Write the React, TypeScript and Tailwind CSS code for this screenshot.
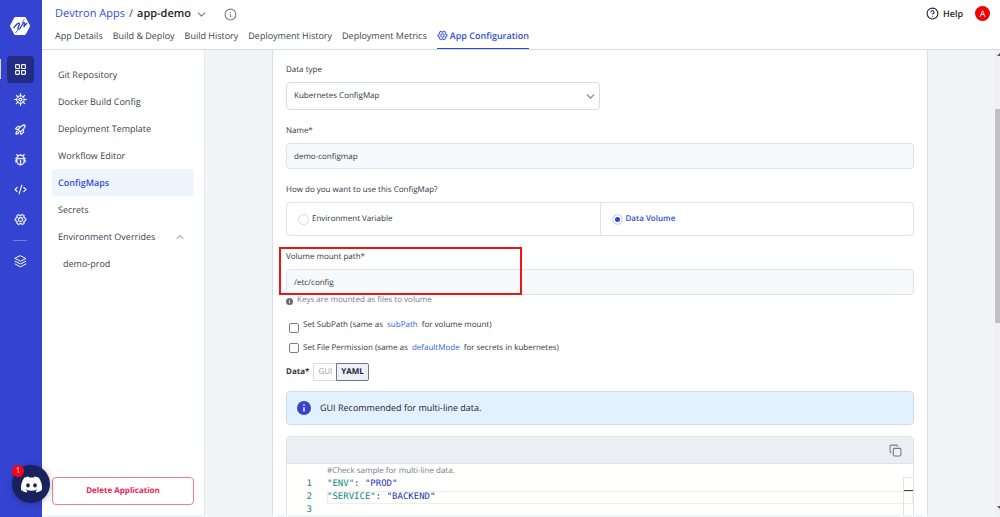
import { useState } from "react";
import type { ReactNode } from "react";
import { ChevronDown, ChevronUp, CircleHelp, Copy, Info, LayoutGrid, CodeXml } from "lucide-react";
import { PiBugBeetle, PiGearSix, PiRocketLaunch } from "react-icons/pi";
import { FaDiscord } from "react-icons/fa";

const TABS = ["App Details", "Build & Deploy", "Build History", "Deployment History", "Deployment Metrics"];

const CONFIG_LINKS = [
  "Git Repository",
  "Docker Build Config",
  "Deployment Template",
  "Workflow Editor",
  "ConfigMaps",
  "Secrets",
];

const YAML_ROWS = [
  { key: '"ENV"', value: '"PROD"' },
  { key: '"SERVICE"', value: '"BACKEND"' },
];

function Logo() {
  return (
    <svg viewBox="0 0 40 40" className="h-5 w-5" aria-hidden="true">
      <path d="M11 2h18a3 3 0 0 1 2.600 1.500l8 15a3 3 0 0 1 0 3l-8 15A3 3 0 0 1 29 38H11a3 3 0 0 1-2.600-1.500l-8-15a3 3 0 0 1 0-3l8-15A3 3 0 0 1 11 2z" fill="#fff" />
      <path d="M7 24l7-8q4-3 5 0l-3 8q0 4 4 1l6-10q3-3 3 0l-1 6 6-7" fill="none" stroke="#3444d1" strokeWidth="2.800" strokeLinejoin="round" />
      <path d="M11 34l6-8M29 6l-5 8" fill="none" stroke="#3444d1" strokeWidth="1.600" />
    </svg>
  );
}

function HelmIcon() {
  const spokes = [0, 45, 90, 135, 180, 225, 270, 315];
  return (
    <svg viewBox="0 0 24 24" className="h-[13px] w-[13px]" fill="none" stroke="currentColor" strokeWidth="1.900" strokeLinecap="round" aria-hidden="true">
      <circle cx="12" cy="12" r="7" />
      <circle cx="12" cy="12" r="2.500" />
      {spokes.map((a) => (
        <g key={a} transform={`rotate(${a} 12 12)`}>
          <path d="M12 5V1" />
          <path d="M12 9.500V5" strokeWidth="0.800" />
        </g>
      ))}
    </svg>
  );
}

function LayersIcon() {
  return (
    <svg viewBox="0 0 24 24" className="h-[13px] w-[13px]" fill="none" stroke="currentColor" strokeWidth="1.800" strokeLinecap="round" strokeLinejoin="round" aria-hidden="true">
      <path d="M12 1.500l10 5-10 5-10-5z" />
      <path d="M2 11.500l10 5 10-5M2 16.500l10 5.500 10-5.500" />
    </svg>
  );
}

function RailItem({ label, active, children }: { label: string; active?: boolean; children: ReactNode }) {
  return (
    <button
      type="button"
      aria-label={label}
      className={`flex h-[27px] w-[27px] items-center justify-center rounded text-white ${active ? "bg-[#232c82]" : ""}`}
    >
      {children}
    </button>
  );
}

function Rail() {
  return (
    <nav className="flex w-[42px] shrink-0 flex-col items-center gap-[3px] bg-[#3444d1] pt-4 pr-[2px]">
      <a href="#home" aria-label="Home" className="mb-[17px]">
        <Logo />
      </a>
      <div className="relative">
        <span className="absolute top-[3px] -left-[7px] h-5 w-px bg-white/80" />
        <RailItem label="Applications" active>
          <LayoutGrid size={13} strokeWidth={2} />
        </RailItem>
      </div>
      <RailItem label="Charts"><HelmIcon /></RailItem>
      <RailItem label="Deployment groups"><PiRocketLaunch size={13} strokeWidth={8} /></RailItem>
      <RailItem label="Security"><PiBugBeetle size={13} strokeWidth={8} /></RailItem>
      <RailItem label="Bulk edit"><CodeXml size={13} strokeWidth={2} /></RailItem>
      <RailItem label="Global configurations"><PiGearSix size={13} strokeWidth={8} /></RailItem>
      <span className="my-1 h-px w-[14px] bg-white/30" />
      <RailItem label="Stack manager"><LayersIcon /></RailItem>
    </nav>
  );
}

function Header() {
  return (
    <header className="flex h-[50px] shrink-0 justify-between border-b border-[#d6dbdf] bg-white pr-[10px] pl-[13px]">
      <div className="flex flex-col">
        <div className="flex h-[27px] items-center pt-px text-[11px]">
          <a href="#apps" className="text-[#2f50d8]">Devtron Apps</a>
          <span className="mx-1 text-[#3b444c]">/</span>
          <button type="button" className="flex items-center gap-1 font-semibold text-[#1f2328]">
            app-demo
            <ChevronDown size={13} strokeWidth={2} className="text-[#767d84]" />
          </button>
          <Info size={13} strokeWidth={2} className="ml-4 text-[#767d84]" />
        </div>
        <nav className="flex h-[22px] gap-[10px] text-[9px] leading-[17px] text-[#3b444c]">
          {TABS.map((tab) => (
            <a key={tab} href="#tab">{tab}</a>
          ))}
          <a href="#config" className="flex h-[22px] gap-[2px] border-b border-[#2f45d4] font-semibold text-[#2f50d8]">
            <PiGearSix size={11} strokeWidth={6} className="mt-[3px]" />
            App Configuration
          </a>
        </nav>
      </div>
      <div className="flex h-[27px] items-center gap-3">
        <button type="button" className="flex items-center gap-1 text-[9px] font-semibold text-[#1f2328]">
          <CircleHelp size={13} strokeWidth={2} />
          Help
        </button>
        <span className="flex h-[15px] w-[15px] items-center justify-center rounded-full bg-[#ee0000] text-[9px] text-white">A</span>
      </div>
    </header>
  );
}

function Sidebar() {
  return (
    <aside className="flex w-[163px] shrink-0 flex-col justify-between border-r border-[#e4e7ea] bg-white px-[10px] pt-[11px] pb-[10px] text-[9px] text-[#3b444c]">
      <nav className="flex flex-col">
        {CONFIG_LINKS.map((link) => (
          <a
            key={link}
            href="#section"
            className={`h-[27px] rounded-sm px-[6px] leading-[27px] ${link === "ConfigMaps" ? "bg-[#eef5ff] font-semibold text-[#2f50d8]" : ""}`}
          >
            {link}
          </a>
        ))}
        <button type="button" className="flex h-[27px] items-center justify-between pr-2 pl-[6px]">
          Environment Overrides
          <ChevronUp size={12} strokeWidth={2} className="text-[#767d84]" />
        </button>
        <a href="#demo-prod" className="h-[27px] pl-[11px] leading-[27px]">demo-prod</a>
      </nav>
      <button type="button" className="h-7 rounded-sm border border-[#f77a94] text-[8px] font-bold text-[#f5234f]">
        Delete Application
      </button>
    </aside>
  );
}

function TextField({ id, label, value }: { id: string; label: string; value: string }) {
  return (
    <div className="flex flex-col gap-1">
      <label htmlFor={id}>{label}</label>
      <input
        id={id}
        defaultValue={value}
        className="h-[26px] rounded-sm border border-[#dfe3e8] bg-[#f7fafc] px-[7px] outline-none"
      />
    </div>
  );
}

function MountOption({ label, checked, onSelect }: { label: string; checked: boolean; onSelect: () => void }) {
  return (
    <label className={`flex flex-1 items-center gap-[3px] px-[11px] ${checked ? "font-semibold text-[#2f50d8]" : ""}`}>
      <input
        type="radio"
        name="mount"
        checked={checked}
        onChange={onSelect}
        className="h-[11px] w-[11px] appearance-none rounded-full border border-[#d6dbdf] bg-white bg-clip-padding checked:bg-[#2f45d4] checked:shadow-[inset_0_0_0_2px_#ffffff]"
      />
      {label}
    </label>
  );
}

function CheckRow({ id, align, before, link, after }: { id: string; align: string; before: string; link: string; after: string }) {
  return (
    <div className={`flex h-4 gap-1 pl-[3px] ${align}`}>
      <input id={id} type="checkbox" className="h-[10px] w-[10px] appearance-none rounded-xs border border-[#767d84] bg-white" />
      <label htmlFor={id}>
        {before} <a href="#docs" className="mx-[2px] text-[#2f66e0]">{link}</a> {after}
      </label>
    </div>
  );
}

function CodeEditor() {
  return (
    <section className="mt-[11px] rounded-sm border border-[#dfe3e8]">
      <div className="flex h-[27px] items-center justify-end border-b border-[#dfe3e8] bg-[#ebeff4] pr-[11px]">
        <button type="button" aria-label="Copy">
          <Copy size={13} strokeWidth={2} className="-scale-x-100 -scale-y-100 rotate-180 text-[#767d84]" />
        </button>
      </div>
      <div className="bg-[#fffffe] font-['DejaVu_Sans_Mono',monospace] text-[9px] leading-[13px]">
        <p className="h-[13px] pl-10 font-['Open_Sans',sans-serif] text-[8px] text-[#767d84]">#Check sample for multi-line data.</p>
        <div className="relative pt-px">
          {YAML_ROWS.map((row, i) => (
            <div key={row.key} className="flex h-[13px]">
              <span className="w-[25px] text-right text-[#237893]">{i + 1}</span>
              <code className={`ml-[15px] flex-1 whitespace-pre font-['DejaVu_Sans_Mono',monospace] ${i === 1 ? "shadow-[inset_0_0_0_1px_#eeeeee]" : ""}`}>
                <span className="text-[#098a80]">{row.key}</span>
                <span>: </span>
                <span className="text-[#2334b8]">{row.value}</span>
              </code>
            </div>
          ))}
          <div className="h-[13px] w-[25px] text-right text-[#237893]">3</div>
          <div className="absolute inset-y-0 right-0 w-[10px] border-t border-l border-[#e2e2e2]">
            <div className="mt-3 h-px bg-[#424242]" />
          </div>
        </div>
      </div>
    </section>
  );
}

function ConfigForm() {
  const [mount, setMount] = useState("Data Volume");

  return (
    <form className="flex-1 overflow-hidden border-x border-[#d9dee3] bg-white px-[13px] pt-3 text-[8px] leading-4 text-[#2f373f]">
      <div className="flex flex-col gap-[13px]">
        <div className="flex flex-col gap-1">
          <label htmlFor="data-type">Data type</label>
          <div className="relative w-1/2">
            <select id="data-type" className="h-7 w-full appearance-none rounded-sm border border-[#d6dbdf] bg-white px-[7px]">
              <option>Kubernetes ConfigMap</option>
            </select>
            <ChevronDown size={13} strokeWidth={2} className="pointer-events-none absolute top-[8px] right-[3px] text-[#767d84]" />
          </div>
        </div>

        <TextField id="name" label="Name*" value="demo-configmap" />

        <fieldset>
          <legend className="mb-1">How do you want to use this ConfigMap?</legend>
          <div className="flex h-[34px] divide-x divide-[#dfe3e8] rounded-sm border border-[#dfe3e8]">
            {["Environment Variable", "Data Volume"].map((option) => (
              <MountOption key={option} label={option} checked={mount === option} onSelect={() => setMount(option)} />
            ))}
          </div>
        </fieldset>

        <div className="relative">
          <TextField id="mount-path" label="Volume mount path*" value="/etc/config" />
          {/* highlight around the mount path */}
          <div className="pointer-events-none absolute -top-[2px] bottom-0 -left-[7px] w-[243px] border-2 border-[#f01414]" />
        </div>
      </div>

      <p className="flex h-[10px] items-center gap-1 leading-[10px] text-[#767d84]">
        <svg viewBox="0 0 16 16" className="mt-[3px] h-[7px] w-[7px]" aria-hidden="true">
          <circle cx="8" cy="8" r="8" fill="#666c73" />
          <path d="M8 7v5M8 3.500v2" stroke="#fff" strokeWidth="2" />
        </svg>
        Keys are mounted as files to volume
      </p>

      <div className="mt-3 flex flex-col gap-[7px]">
        <CheckRow id="sub-path" align="items-end" before="Set SubPath (same as" link="subPath" after="for volume mount)" />
        <CheckRow id="file-permission" align="items-center" before="Set File Permission (same as" link="defaultMode" after="for secrets in kubernetes)" />
      </div>

      <div className="mt-[7px] flex h-[18px] items-center gap-1">
        <span className="font-bold">Data*</span>
        <div className="flex h-[18px]">
          <button type="button" className="rounded-l-xs border border-r-0 border-[#d6dbdf] px-1 text-[#9aa0a6]">GUI</button>
          <button type="button" className="rounded-r-xs border border-[#6f7396] bg-[#edf1f5] px-1 font-bold text-[#1f2340]">YAML</button>
        </div>
      </div>

      <div className="mt-[10px] flex h-[34px] items-center gap-[9px] rounded-sm border border-[#c5ddfb] bg-[#e3f0ff] px-[10px] text-[9px] text-[#1f2328]">
        <svg viewBox="0 0 16 16" className="h-[14px] w-[14px]" aria-hidden="true">
          <circle cx="8" cy="8" r="8" fill="#3444d1" />
          <path d="M8 7v5M8 3.800v1.700" stroke="#fff" strokeWidth="1.600" />
        </svg>
        GUI Recommended for multi-line data.
      </div>

      <CodeEditor />
    </form>
  );
}

function ScrollTrack() {
  return (
    <div className="flex w-[5px] shrink-0 flex-col items-end justify-between overflow-hidden bg-[#f1f1f1]">
      <svg viewBox="0 0 3 3" className="mt-[3px] h-[3px] w-[3px]" aria-hidden="true"><path d="M0 3 3 0v3z" fill="#505050" /></svg>
      <div className="flex w-full flex-1 flex-col pt-[53px]">
        <div className="h-[54%] bg-[#c1c1c1]" />
      </div>
      <svg viewBox="0 0 3 3" className="mb-[6px] h-[3px] w-[3px]" aria-hidden="true"><path d="M0 0h3v3z" fill="#505050" /></svg>
    </div>
  );
}

export default function App() {
  return (
    <div className="relative flex h-screen overflow-hidden bg-[#f2f4f8] font-['Open_Sans',sans-serif] **:[text-rendering:geometricPrecision]">
      <Rail />
      <div className="flex min-w-0 flex-1 flex-col">
        <Header />
        <div className="flex min-h-0 flex-1 pb-[2px]">
          <Sidebar />
          <main className="flex min-w-0 flex-1 px-[67px]">
            <ConfigForm />
          </main>
          <ScrollTrack />
        </div>
      </div>
      <button
        type="button"
        aria-label="Open chat"
        className="absolute bottom-[14px] left-3 flex h-[38px] w-[38px] items-center justify-center rounded-full bg-[#17225e] text-white shadow-[0_1px_6px_rgba(0,0,0,0.3)]"
      >
        <FaDiscord size={23} />
        <span className="absolute top-0 left-0 flex h-3 w-3 items-center justify-center rounded-full bg-[#ff0016] text-[8px]">1</span>
      </button>
    </div>
  );
}
